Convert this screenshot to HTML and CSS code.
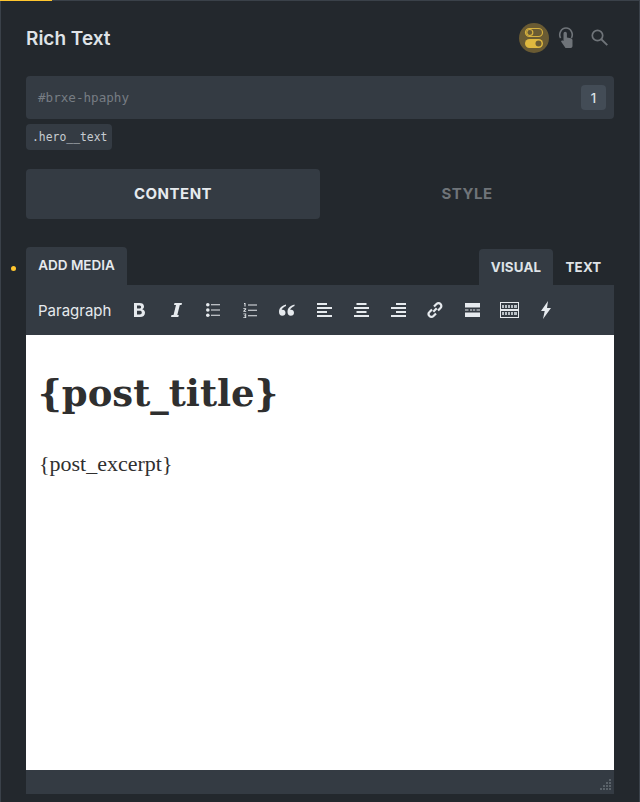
FILE: index.html
```html
<!DOCTYPE html>
<html lang="en">
<head>
<meta charset="utf-8">
<title>Rich Text</title>
<link rel="stylesheet" href="styles.css">
</head>
<body>
<div class="panel">
  <span class="accent-line"></span>
  <header class="head">
    <h1 class="title">Rich Text</h1>
    <div class="head-icons">
      <span class="icon-round">
        <svg width="20" height="22" viewBox="0 0 20 22" fill="none">
          <rect x="1.500" y="1.500" width="17" height="8" rx="4" stroke="#d6b13f" stroke-width="1.200"/>
          <circle cx="5.800" cy="5.500" r="3" stroke="#d6b13f" stroke-width="1.200"/>
          <rect x="1" y="12" width="18" height="9" rx="4.500" fill="#e0b93f"/>
          <circle cx="14.500" cy="16.500" r="3" fill="#6a5b33"/>
        </svg>
      </span>
      <svg class="icon-touch" width="16" height="21" viewBox="0 0 16 21" fill="none">
        <path d="M2.600 11C.4 7.500 2.800 1 8 1s7.600 6.200 5.400 10" stroke="#6f7479" stroke-width="1.600"/>
        <path d="M5.500 6.500a1.700 1.700 0 0 1 3.400 0v4l3.800.8c1 .2 1.800 1 1.800 2V19c0 1-.8 2-1.800 2H7.500L3 14.500l1-1.200 1.500.7z" fill="#6f7479"/>
      </svg>
      <svg class="icon-search" width="17" height="17" viewBox="0 0 17 17" fill="none">
        <circle cx="6.500" cy="6.500" r="5.200" stroke="#6f7479" stroke-width="1.700"/>
        <path d="M10.300 10.300l6 5.800" stroke="#6f7479" stroke-width="1.900"/>
      </svg>
    </div>
  </header>

  <div class="selector">
    <span class="selector-id">#brxe-hpaphy</span>
    <span class="selector-count">1</span>
  </div>
  <div class="classes"><span class="class-pill">.hero__text</span></div>

  <nav class="tabs">
    <span class="tab tab-active">CONTENT</span>
    <span class="tab">STYLE</span>
  </nav>

  <section class="editor">
    <span class="dot"></span>
    <div class="editor-tabs">
      <span class="add-media">ADD MEDIA</span>
      <div class="mode-tabs">
        <span class="mode mode-active">VISUAL</span>
        <span class="mode">TEXT</span>
      </div>
    </div>
    <div class="toolbar">
      <span class="format">Paragraph</span>
      <div class="tools">
        <svg width="11" height="14" viewBox="0 0 11 14"><path fill-rule="evenodd" fill="#e6eaee" d="M0 0h5.500C8.300 0 10 1.200 10 3.400c0 1.300-.7 2.300-1.800 2.800C9.800 6.700 11 7.900 11 9.700 11 12.500 9 14 6 14H0zm3 2.400v3h2.200c1.200 0 1.900-.5 1.900-1.500S6.400 2.400 5.200 2.400zm0 5.300v3.900h2.700c1.300 0 2.100-.7 2.100-2s-.8-1.900-2.100-1.900z"/></svg>
        <svg width="11" height="14" viewBox="0 0 11 14"><path fill="#e6eaee" d="M3.500 0H11l-.5 2H8.800L6.300 12h1.500l-.5 2H0l.5-2h2L5 2H3z"/></svg>
        <svg width="14" height="14" viewBox="0 0 14 14" fill="#e6eaee"><circle cx="1.800" cy="1.800" r="1.800"/><circle cx="1.800" cy="7" r="1.800"/><circle cx="1.800" cy="12.200" r="1.800"/><path d="M5 1.300h9v1H5zM5 6.500h9v1H5zM5 11.700h9v1H5z"/></svg>
        <svg width="14" height="15" viewBox="0 0 14 15" fill="#e6eaee"><path d="M1 0h1.500v3.500h-1V1H1zM.3 5.200h2.900v1L1.700 8h1.500v.8H.3V8L2 6H.3zM.3 10.500h2.900V15H.3v-.8h2v-1H1v-.6h1.300v-1.300h-2zM5 1.500h9v1H5zM5 6.800h9v1H5zM5 12.200h9v1H5z"/></svg>
        <svg width="16" height="12" viewBox="0 0 16 12" fill="#e6eaee"><path d="M7 .5C3.200 1.500 0 3.600 0 8c0 2.400 1.300 3.800 3.300 3.800s3.200-1.400 3.200-3.100-1.200-3-2.900-3c-.4 0-.8.100-1 .2C3 4.300 4.900 2.800 7 2zM15.500.5C11.700 1.500 8.500 3.600 8.500 8c0 2.400 1.300 3.800 3.300 3.800s3.200-1.400 3.200-3.100-1.200-3-2.900-3c-.4 0-.8.100-1 .2.400-1.600 2.300-3.100 4.400-3.900z"/></svg>
        <svg width="15" height="14" viewBox="0 0 15 14" fill="#e6eaee"><path d="M0 0h10v2H0zM0 4h15v2H0zM0 8h10v2H0zM0 12h15v2H0z"/></svg>
        <svg width="15" height="14" viewBox="0 0 15 14" fill="#e6eaee"><path d="M2.500 0h10v2h-10zM0 4h15v2H0zM2.500 8h10v2h-10zM0 12h15v2H0z"/></svg>
        <svg width="15" height="14" viewBox="0 0 15 14" fill="#e6eaee"><path d="M5 0h10v2H5zM0 4h15v2H0zM5 8h10v2H5zM0 12h15v2H0z"/></svg>
        <svg width="18" height="18" viewBox="0 0 18 18" fill="none" stroke="#e6eaee" stroke-width="2.200"><path d="M7.300 10.700l3.400-3.400"/><path d="M8 5.500L10.500 3c1.200-1.200 2.900-1.200 4 0s1.200 2.900 0 4L12 9.500"/><path d="M10 12.500L7.500 15c-1.200 1.200-2.900 1.200-4 0s-1.200-2.900 0-4L6 8.500"/></svg>
        <svg width="15" height="14" viewBox="0 0 15 14" fill="#e6eaee"><path d="M0 0h15v4.500H0zM0 9.500h15V14H0zM0 6.500h3.500v1H0zM5 6.500h2.200v1H5zM8 6.500h2.200v1H8zM11.500 6.500H15v1h-3.500z"/></svg>
        <svg width="19" height="16" viewBox="0 0 19 16"><path fill="#e6eaee" d="M0 0h19v16H0z"/><path fill="#343b43" d="M1 1h17v14H1z"/><path fill="#e6eaee" d="M1 7h17v2H1z"/><path fill="#b9c0c6" d="M2 3h15v3H2zM2 10h15v3H2z"/><path fill="#343b43" d="M4 3h1v3H4zM7 3h1v3H7zM10 3h1v3h-1zM13 3h1v3h-1zM4 10h1v3H4zM7 10h1v3H7zM10 10h1v3h-1zM13 10h1v3h-1z"/></svg>
        <svg width="12" height="18" viewBox="0 0 12 18"><path fill="#e6eaee" d="M8 0L1 10h3.700L3 18l8-11H7z"/></svg>
      </div>
    </div>
    <div class="content">
      <h2 class="post-title">{post_title}</h2>
      <p class="post-excerpt">{post_excerpt}</p>
    </div>
    <div class="statusbar">
      <svg class="grip" width="14" height="14" viewBox="0 0 14 14" fill="#5a6269"><path d="M10 0h2v2h-2zM7 3h2v2H7zM10 3h2v2h-2zM4 6h2v2H4zM7 6h2v2H7zM10 6h2v2h-2zM1 9h2v2H1zM4 9h2v2H4zM7 9h2v2H7zM10 9h2v2h-2z"/></svg>
    </div>
  </section>
</div>
</body>
</html>
```
FILE: styles.css
```css
* { box-sizing: border-box; }
html, body { margin: 0; padding: 0; }
body {
  width: 640px;
  height: 802px;
  overflow: hidden;
  background: #23282d;
  font-family: Inter, "Noto Sans", sans-serif;
}
.panel {
  position: relative;
  width: 640px;
  height: 802px;
  padding: 0 25px;
  background: #23282d;
  border-top: 1px solid #3a4149;
  border-left: 1px solid #3a4149;
  border-right: 1px solid #3a4149;
  display: flex;
  flex-direction: column;
}
.accent-line {
  position: absolute;
  left: -1px;
  top: -1px;
  width: 52px;
  height: 1px;
  background: #ffc62e;
}
.head {
  height: 75px;
  display: flex;
  align-items: center;
  justify-content: space-between;
}
.title {
  margin: 0;
  font-size: 19px;
  font-weight: 600;
  color: #dfe3e7;
}
.head-icons { display: flex; align-items: center; padding-bottom: 2px; }
.icon-round {
  width: 30px;
  height: 30px;
  border-radius: 50%;
  background: #6a5b33;
  display: flex;
  align-items: center;
  justify-content: center;
}
.icon-touch { margin-left: 9px; }
.icon-search { margin: 0 6px 0 17px; }
.selector {
  height: 43px;
  background: #343b43;
  border-radius: 4px;
  display: flex;
  align-items: center;
  justify-content: space-between;
  padding: 0 8px 0 12px;
}
.selector-id {
  font-family: "DejaVu Sans Mono", monospace;
  font-size: 12.6px;
  color: #777d83;
}
.selector-count {
  width: 25px;
  height: 25px;
  background: #434c56;
  border-radius: 4px;
  display: flex;
  align-items: center;
  justify-content: center;
  font-size: 13px;
  font-weight: 500;
  color: #dfe3e7;
}
.classes { display: flex; margin-top: 5px; }
.class-pill {
  height: 26px;
  padding: 0 5px 0 6px;
  background: #343b43;
  border-radius: 4px;
  display: flex;
  align-items: center;
  font-family: "DejaVu Sans Mono", monospace;
  font-size: 11.4px;
  color: #c7ccd1;
}
.tabs {
  display: grid;
  grid-template-columns: 1fr 1fr;
  height: 50px;
  margin-top: 19px;
}
.tab {
  display: flex;
  align-items: center;
  justify-content: center;
  border-radius: 4px;
  padding-bottom: 1px;
  font-size: 15px;
  font-weight: 700;
  letter-spacing: 0.5px;
  color: #6f7479;
}
.tab-active { background: #343b43; color: #e6eaee; }
.editor {
  position: relative;
  margin-top: 28px;
  display: flex;
  flex-direction: column;
}
.dot {
  position: absolute;
  left: -15px;
  top: 19px;
  width: 5px;
  height: 5px;
  border-radius: 50%;
  background: #ffc62e;
}
.editor-tabs {
  height: 38px;
  display: flex;
  justify-content: space-between;
  align-items: flex-end;
}
.add-media {
  width: 101px;
  height: 38px;
  background: #343b43;
  border-radius: 4px 4px 0 0;
  padding-top: 11px;
  text-align: center;
  font-size: 13.500px;
  font-weight: 600;
  line-height: 15px;
  color: #e6eaee;
}
.mode-tabs { display: flex; }
.mode {
  height: 36px;
  padding-top: 11px;
  width: 61px;
  text-align: center;
  font-size: 13.300px;
  font-weight: 700;
  line-height: 15px;
  letter-spacing: 0.2px;
  color: #dfe3e7;
}
.mode-active { width: 74px; background: #343b43; border-radius: 4px 4px 0 0; }
.toolbar {
  height: 50px;
  background: #343b43;
  display: flex;
  align-items: center;
  padding-left: 12px;
}
.format { font-size: 15px; color: #e6eaee; width: 82.500px; }
.tools {
  display: grid;
  grid-auto-flow: column;
  grid-auto-columns: 37px;
  justify-items: center;
  align-items: center;
}
.tools svg { display: block; }
.content {
  height: 435px;
  background: #fff;
  padding: 36px 13px 0 12px;
  color: #2f2f2f;
  font-family: "Liberation Serif", serif;
}
.post-title {
  margin: 0;
  font-family: "DejaVu Serif", serif;
  font-size: 37px;
  line-height: 44px;
  font-weight: 700;
}
.post-excerpt {
  margin: 36px 0 0 1px;
  font-size: 22px;
  line-height: 26px;
}
.statusbar {
  position: relative;
  height: 24px;
  background: #343b43;
}
.grip { position: absolute; right: 1px; bottom: 1px; }
```
